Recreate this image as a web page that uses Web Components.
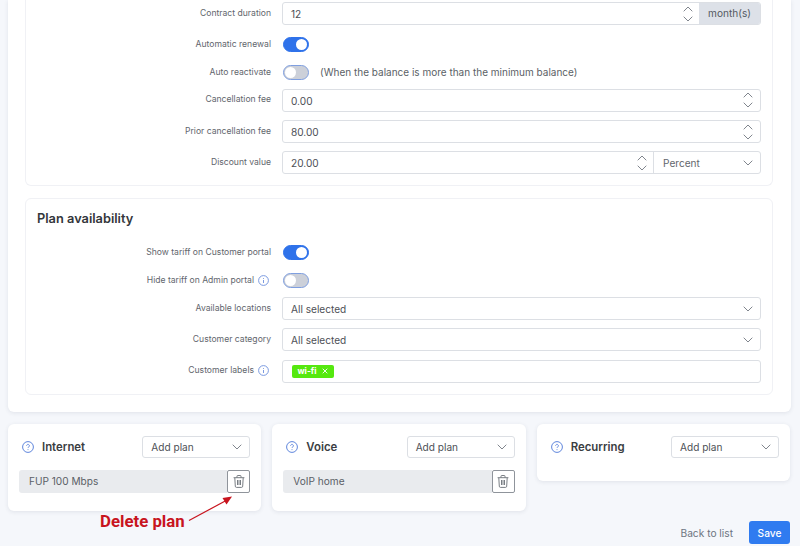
<!DOCTYPE html>
<html>
<head>
<meta charset="utf-8">
<style>
  html, body { margin: 0; height: 546px; overflow: hidden; }
  body { background: #f5f7fb; font-family: Inter, "Liberation Sans", sans-serif; color: #4d5056; }
</style>
</head>
<body>
<tariff-page>
  <panel-card class="first">
    <field-row label="Contract duration"><num-field value="12" unit="month(s)"></num-field></field-row>
    <field-row label="Automatic renewal" slim><switch-toggle on></switch-toggle></field-row>
    <field-row label="Auto reactivate" slim><switch-toggle></switch-toggle><span style="margin-left:11px;font-size:10px;color:#5b5f66">(When the balance is more than the minimum balance)</span></field-row>
    <field-row label="Cancellation fee"><num-field value="0.00"></num-field></field-row>
    <field-row label="Prior cancellation fee"><num-field value="80.00"></num-field></field-row>
    <field-row label="Discount value"><num-field value="20.00" choice="Percent"></num-field></field-row>
  </panel-card>
  <panel-card heading="Plan availability">
    <field-row label="Show tariff on Customer portal" slim><switch-toggle on></switch-toggle></field-row>
    <field-row label="Hide tariff on Admin portal" info slim><switch-toggle></switch-toggle></field-row>
    <field-row label="Available locations"><select-box text="All selected"></select-box></field-row>
    <field-row label="Customer category"><select-box text="All selected"></select-box></field-row>
    <field-row label="Customer labels" info><tag-input tag="wi-fi"></tag-input></field-row>
  </panel-card>
  <plan-card slot="plans" title="Internet" plan="FUP 100 Mbps"></plan-card>
  <plan-card slot="plans" title="Voice" plan="VoIP home"></plan-card>
  <plan-card slot="plans" title="Recurring"></plan-card>
  <delete-note slot="note"></delete-note>
</tariff-page>

<script>
const CHEVRON = '<svg width="10" height="6" viewBox="0 0 10 6" fill="none" stroke="#80858d" stroke-width="1"><path d="M.7.7 5 5l4.3-4.3"/></svg>';

class TariffPage extends HTMLElement {
  constructor() {
    super();
    this.attachShadow({ mode: 'open' }).innerHTML = `
      <style>
        :host { display: block; position: relative; height: 546px; }
        .main {
          margin: 0 9px 0 8px;
          padding: 0 18px 17px 17px;
          height: 395px;
          background: #fff;
          border-radius: 0 0 6px 6px;
          box-shadow: 0 1px 4px rgba(40, 50, 80, .1);
          display: flex;
          flex-direction: column;
          gap: 12px;
        }
        .plans {
          display: flex;
          align-items: flex-start;
          gap: 11px;
          margin: 12px 10px 0 8px;
        }
        ::slotted(plan-card) { flex: 1; }
        footer {
          display: flex;
          align-items: center;
          gap: 16px;
          position: absolute;
          right: 10px;
          bottom: 2px;
        }
        .back { font-size: 10.2px; color: #6c7480; }
        .save {
          width: 41px;
          height: 23px;
          border-radius: 3px;
          background: #2f7bf0;
          color: #fff;
          font-size: 10.2px;
          font-weight: 500;
          display: flex;
          align-items: center;
          justify-content: center;
        }
      </style>
      <div class="main"><slot></slot></div>
      <div class="plans"><slot name="plans"></slot></div>
      <footer><span class="back">Back to list</span><span class="save">Save</span></footer>
      <slot name="note"></slot>
    `;
  }
}

class PanelCard extends HTMLElement {
  constructor() {
    super();
    this.attachShadow({ mode: 'open' }).innerHTML = `
      <style>
        :host {
          display: block;
          background: #fff;
          border: 1px solid #f0f1f5;
          border-radius: 6px;
          padding: 0 11px 11px;
        }
        :host(.first) { border-top: none; border-radius: 0 0 6px 6px; padding-top: 2px; height: 173px; }
        :host(:not(.first)) { height: 185px; }
        h2 {
          margin: 13px 0 15px;
          font-size: 12.8px;
          line-height: 14px;
          font-weight: 600;
          color: #33363b;
        }
        .rows { display: flex; flex-direction: column; gap: 8.3px; }
      </style>
      <h2></h2>
      <div class="rows"><slot></slot></div>
    `;
    const h = this.shadowRoot.querySelector('h2');
    if (this.getAttribute('heading')) h.textContent = this.getAttribute('heading');
    else h.remove();
  }
}

class FieldRow extends HTMLElement {
  constructor() {
    super();
    this.attachShadow({ mode: 'open' }).innerHTML = `
      <style>
        :host { display: flex; align-items: center; height: 23px; font-size: 10.1px; }
        :host([slim]) { height: 20px; margin: 1px 0 -1.5px; }
        label {
          width: 234px;
          margin-right: 11px;
          flex: none;
          display: flex;
          justify-content: flex-end;
          align-items: center;
          gap: 4px;
          font-size: 8.6px;
          color: #62666d;
          margin-bottom: 2px;
        }
        :host([slim]) label { margin-bottom: 0; }
        :host([info]) label { padding-right: 2px; box-sizing: border-box; }
        svg { flex: none; }
        .c { flex: 1; display: flex; align-items: center; min-width: 0; }
      </style>
      <label><span></span></label>
      <div class="c"><slot></slot></div>
    `;
    const l = this.shadowRoot.querySelector('label');
    l.firstElementChild.textContent = this.getAttribute('label');
    if (this.hasAttribute('info')) {
      l.insertAdjacentHTML('beforeend', '<svg width="11" height="11" viewBox="0 0 11 11" fill="none" stroke="#6d8fdc" stroke-width=".9"><circle cx="5.5" cy="5.5" r="4.9"/><path d="M5.5 5v3M5.5 3v.9"/></svg>');
    }
  }
}

class NumField extends HTMLElement {
  constructor() {
    super();
    const unit = this.getAttribute('unit');
    const choice = this.getAttribute('choice');
    this.attachShadow({ mode: 'open' }).innerHTML = `
      <style>
        :host {
          display: flex;
          flex: 1;
          height: 23px;
          box-sizing: border-box;
          border: 1px solid #dcdfe4;
          border-radius: 3px;
          background: #fff;
          font-size: 10.1px;
          color: #4d5056;
          overflow: hidden;
        }
        .v { flex: 1; padding-left: 8px; line-height: 22px; }
        .spin {
          width: 26px;
          box-sizing: border-box;
          padding-left: 2px;
          display: flex;
          flex-direction: column;
          align-items: center;
          justify-content: center;
          gap: 4px;
        }
        .addon { padding-left: 4px; }
        .spin svg:first-child { transform: rotate(180deg); }
        .unit { width: 61px; background: #dde1e8; text-align: center; line-height: 21px; color: #555a62; }
        .choice {
          width: 107px;
          box-sizing: border-box;
          border-left: 1px solid #dcdfe4;
          padding: 0 7px 0 9px;
          display: flex;
          align-items: center;
          justify-content: space-between;
          color: #62666d;
        }
      </style>
      <span class="v">${this.getAttribute('value')}</span>
      <span class="spin ${unit || choice ? 'addon' : ''}">${CHEVRON}${CHEVRON}</span>
      ${unit ? `<span class="unit">${unit}</span>` : ''}
      ${choice ? `<span class="choice">${choice}${CHEVRON}</span>` : ''}
    `;
  }
}

class SwitchToggle extends HTMLElement {
  constructor() {
    super();
    this.attachShadow({ mode: 'open' }).innerHTML = `
      <style>
        :host {
          display: block;
          width: 26px;
          height: 15px;
          margin-left: 1px;
          box-sizing: border-box;
          border-radius: 8px;
          border: 1px solid #7f9fe0;
          background: #ccd0d9;
          position: relative;
          flex: none;
        }
        :host([on]) { background: #2f72ea; border-color: #2f72ea; }
        i {
          position: absolute;
          left: 1px;
          top: 1px;
          width: 11px;
          height: 11px;
          border-radius: 50%;
          background: #fff;
        }
        :host([on]) i { left: 12px; }
      </style>
      <i></i>
    `;
  }
}

class SelectBox extends HTMLElement {
  constructor() {
    super();
    this.attachShadow({ mode: 'open' }).innerHTML = `
      <style>
        :host {
          display: flex;
          flex: 1;
          height: 23px;
          box-sizing: border-box;
          align-items: center;
          justify-content: space-between;
          padding: 0 7px 0 8px;
          border: 1px solid #dcdfe4;
          border-radius: 3px;
          background: #fff;
          font-size: 10.1px;
          color: #4d5056;
        }
      </style>
      <span>${this.getAttribute('text')}</span>${CHEVRON}
    `;
  }
}

class TagInput extends HTMLElement {
  constructor() {
    super();
    this.attachShadow({ mode: 'open' }).innerHTML = `
      <style>
        :host {
          display: flex;
          flex: 1;
          height: 23px;
          box-sizing: border-box;
          align-items: center;
          padding: 0 9px;
          border: 1px solid #dcdfe4;
          border-radius: 3px;
          background: #fff;
        }
        .tag {
          display: flex;
          align-items: center;
          gap: 6px;
          height: 13px;
          padding: 0 6px 0 5.5px;
          border-radius: 2px;
          background: #55e80f;
          color: #fff;
          font-size: 8.4px;
          font-weight: 700;
        }
      </style>
      <span class="tag">${this.getAttribute('tag')}<svg width="6" height="6" viewBox="0 0 6 6" stroke="#fff" stroke-width=".9"><path d="M.7.7l4.6 4.6M5.3.7.7 5.3"/></svg></span>
    `;
  }
}

class PlanCard extends HTMLElement {
  constructor() {
    super();
    const plan = this.getAttribute('plan');
    this.attachShadow({ mode: 'open' }).innerHTML = `
      <style>
        :host {
          display: block;
          background: #fff;
          border-radius: 6px;
          padding: 12px 11px 18px;
          box-shadow: 0 1px 4px rgba(40, 50, 80, .1);
        }
        header { display: flex; align-items: center; height: 22px; padding-left: 3px; margin-bottom: 5px; }
        h3 { margin: 0 0 0 8px; font-size: 11.4px; font-weight: 600; color: #3a3d42; flex: 1; }
        select-box { flex: none; width: 108px; height: 22px; }
        .plan { display: flex; height: 23px; padding-top: 7px; font-size: 10.1px; }
        .name { flex: 1; background: #e9ebee; border-radius: 3px 0 0 3px; line-height: 22px; padding-left: 10px; color: #5b5f66; }
        .del { width: 23px; box-sizing: border-box; border: 1px solid #8f949b; border-radius: 2px; background: #fff; display: flex; align-items: center; justify-content: center; }
      </style>
      <header>
        <svg width="12" height="12" viewBox="0 0 12 12" fill="none" stroke="#5f86dc" stroke-width="1"><circle cx="6" cy="6" r="5.4"/><path d="M4.6 4.7a1.4 1.4 0 1 1 2.2 1.2c-.5.3-.8.5-.8 1.1M6 8.2v.9" stroke-width=".9"/></svg>
        <h3>${this.getAttribute('title')}</h3>
        <select-box text="Add plan"></select-box>
      </header>
      ${plan ? `<div class="plan"><span class="name">${plan}</span><span class="del"><svg width="12" height="13" viewBox="0 0 12 13" fill="none" stroke="#6a6f76" stroke-width=".9"><path d="M.6 2.7h10.8M4 2.5V1.2q0-.7.7-.7h2.6q.7 0 .7.7v1.3M1.8 2.9l.5 8.3q.1 1.2 1.2 1.2h5q1.1 0 1.2-1.2l.5-8.3M4.5 5v5M6 5v5M7.5 5v5"/></svg></span></div>` : ''}
    `;
  }
}

class DeleteNote extends HTMLElement {
  constructor() {
    super();
    this.attachShadow({ mode: 'open' }).innerHTML = `
      <style>
        :host { position: absolute; left: 0; top: 0; width: 800px; height: 546px; pointer-events: none; }
        span {
          position: absolute;
          left: 100px;
          top: 511px;
          font: 700 16.8px/20px Roboto, "Liberation Sans", sans-serif;
          color: #c8141e;
        }
        svg { position: absolute; left: 186px; top: 492px; }
      </style>
      <span>Delete plan</span>
      <svg width="50" height="32" viewBox="0 0 50 32" fill="none">
        <path d="M3 28.5 42 7.5" stroke="#c8141e" stroke-width="1.2"/>
        <path d="M46 4.5 36.5 6 40.5 12.5z" fill="#c8141e"/>
      </svg>
    `;
  }
}

customElements.define('tariff-page', TariffPage);
customElements.define('panel-card', PanelCard);
customElements.define('field-row', FieldRow);
customElements.define('num-field', NumField);
customElements.define('switch-toggle', SwitchToggle);
customElements.define('select-box', SelectBox);
customElements.define('tag-input', TagInput);
customElements.define('plan-card', PlanCard);
customElements.define('delete-note', DeleteNote);
</script>
</body>
</html>
